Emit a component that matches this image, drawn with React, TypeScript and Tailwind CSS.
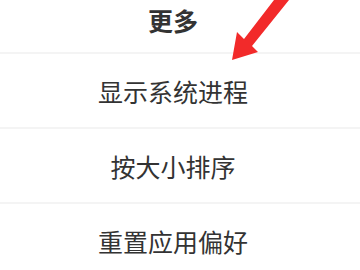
import React from "react";

const items = ["显示系统进程", "按大小排序", "重置应用偏好"];

export default function App() {
  return (
    <div
      className="relative w-[360px] h-[270px] overflow-hidden bg-white text-[#333333]"
      style={{ fontFamily: '"Noto Sans CJK SC", "Noto Sans", sans-serif' }}
    >
      {/* header */}
      <div className="h-[52px] flex justify-center pr-[14px] pt-[3px]">
        <span className="text-[25px] font-bold leading-[34px]">更多</span>
      </div>

      {items.map((t) => (
        <div key={t}>
          <div className="h-[2px] bg-[#f4f4f4]" />
          <div className="h-[73px] flex items-center justify-center pr-[14px]">
            <span className="text-[25px] leading-[34px]">{t}</span>
          </div>
        </div>
      ))}

      {/* red arrow annotation */}
      <svg
        className="absolute left-0 top-0"
        width="360"
        height="270"
        viewBox="0 0 360 270"
      >
        <polygon
          points="232,60 237,32 244,39 274,0 289,0 252,46 258,52"
          fill="#f22a2a"
        />
      </svg>
    </div>
  );
}
